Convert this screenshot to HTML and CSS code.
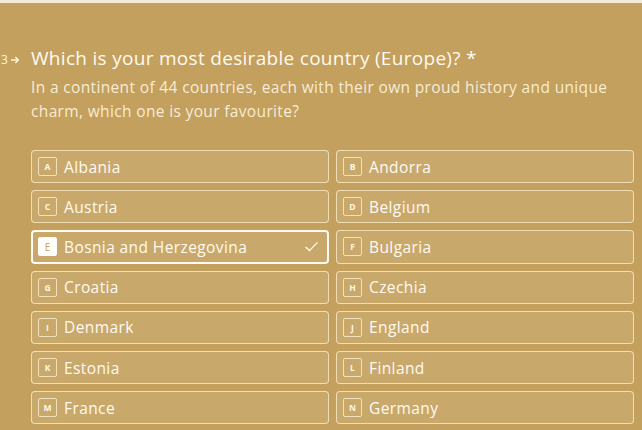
FILE: index.html
```html
<!DOCTYPE html>
<html>
<head>
<meta charset="utf-8">
<link rel="stylesheet" href="styles.css">
</head>
<body>
<div class="topline"></div>
<main class="question">
  <div class="head">
    <span class="num">3<svg class="arrow" viewBox="0 0 10 10" width="10" height="10"><path d="M1 5h7M5.3 2L8.3 5 5.3 8" fill="none" stroke="currentColor" stroke-width="1.5"/></svg></span>
    <h1 class="title">Which is your most desirable country (Europe)? *</h1>
  </div>
  <p class="desc">In a continent of 44 countries, each with their own proud history and unique charm, which one is your favourite?</p>
  <div class="options">
    <div class="opt"><span class="key">A</span><span class="label">Albania</span></div>
    <div class="opt"><span class="key">B</span><span class="label">Andorra</span></div>
    <div class="opt"><span class="key">C</span><span class="label">Austria</span></div>
    <div class="opt"><span class="key">D</span><span class="label">Belgium</span></div>
    <div class="opt selected"><span class="key">E</span><span class="label">Bosnia and Herzegovina</span><svg class="check" viewBox="0 0 16 12" width="15" height="11"><path d="M1.5 6.5L5.8 10.5 14.5 1.5" fill="none" stroke="currentColor" stroke-width="1.5"/></svg></div>
    <div class="opt"><span class="key">F</span><span class="label">Bulgaria</span></div>
    <div class="opt"><span class="key">G</span><span class="label">Croatia</span></div>
    <div class="opt"><span class="key">H</span><span class="label">Czechia</span></div>
    <div class="opt"><span class="key">I</span><span class="label">Denmark</span></div>
    <div class="opt"><span class="key">J</span><span class="label">England</span></div>
    <div class="opt"><span class="key">K</span><span class="label">Estonia</span></div>
    <div class="opt"><span class="key">L</span><span class="label">Finland</span></div>
    <div class="opt"><span class="key">M</span><span class="label">France</span></div>
    <div class="opt"><span class="key">N</span><span class="label">Germany</span></div>
  </div>
</main>
</body>
</html>
```
FILE: styles.css
```css
* { box-sizing: border-box; }
html, body {
  margin: 0;
  padding: 0;
  height: 100%;
  overflow: hidden;
}
body {
  background: #c3a05e;
  font-family: "Open Sans", Lato, sans-serif;
  color: #fff8e6;
}
.topline {
  height: 3px;
  background: #f4ead6;
}
.question {
  padding: 41px 8px 0 31px;
}
.head {
  position: relative;
  display: flex;
  align-items: baseline;
}
.num {
  position: absolute;
  left: -30px;
  top: 7px;
  font-size: 12px;
  display: flex;
  align-items: center;
  gap: 2px;
  color: #fff3dc;
}
.arrow { display: block; }
.title {
  margin: 0;
  font-weight: 400;
  font-size: 19px;
  letter-spacing: 0.3px;
  line-height: 28px;
  color: #fffaf0;
}
.desc {
  margin: 3px 0 0;
  font-size: 15.5px;
  letter-spacing: 0.35px;
  line-height: 24px;
  color: rgba(255, 246, 226, 0.9);
  max-width: 595px;
}
.options {
  margin-top: 27px;
  display: grid;
  grid-template-columns: 298px 298px;
  column-gap: 7px;
  row-gap: 7px;
}
.opt {
  height: 33.2px;
  display: flex;
  align-items: center;
  padding: 0 8px 0 6px;
  background: rgba(255, 250, 235, 0.1);
  border: 1px solid rgba(255, 243, 210, 0.7);
  border-radius: 4px;
}
.key {
  width: 19px;
  height: 19px;
  display: flex;
  align-items: center;
  justify-content: center;
  border: 1px solid rgba(255, 243, 210, 0.75);
  border-radius: 2px;
  font-size: 8.5px;
  font-weight: 700;
  color: #fff8e6;
  margin-right: 7px;
  flex: none;
}
.label {
  font-size: 15.5px;
  letter-spacing: 0.4px;
  color: #fffaf0;
  flex: 1;
}
.selected {
  border: 2px solid #fffbf2;
  padding-left: 5px;
}
.selected .key {
  background: #fffefa;
  border-color: #fffefa;
  color: #c3a05e;
  font-weight: 400;
  font-size: 10px;
}
.check {
  color: #fffaf0;
  margin-right: 0;
}
```
